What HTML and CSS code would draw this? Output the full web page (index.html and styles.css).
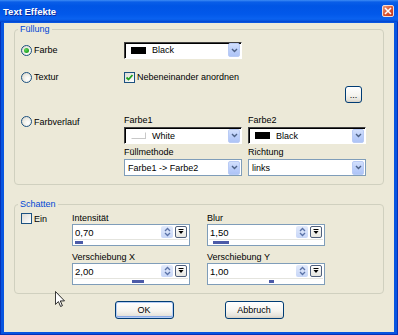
FILE: index.html
```html
<!DOCTYPE html>
<html lang="de">
<head>
  <meta charset="UTF-8" />
  <title>Text Effekte</title>
  <link rel="stylesheet" href="styles.css">
</head>
<body>
<div class="window">
  <div class="titlebar">
    <span class="title">Text Effekte</span>
    <span class="close"><svg width="8" height="8" viewBox="0 0 8 8"><path d="M1 1L7 7M7 1L1 7" stroke="#fff" stroke-width="1.6"/></svg></span>
  </div>
  <div class="frame">
    <div class="client">

      <fieldset class="group fill">
        <legend>Füllung</legend>
        <div class="row row-farbe">
          <label class="opt"><span class="radio on"></span>Farbe</label>
          <div class="combo color">
            <span class="swatch black"></span><span class="value">Black</span>
            <span class="drop"><svg width="7" height="5" viewBox="0 0 7 5"><path d="M1 1l2.5 2.5L6 1" stroke="#4d6185" stroke-width="1.4" fill="none"/></svg></span>
          </div>
        </div>
        <div class="row row-textur">
          <label class="opt"><span class="radio"></span>Textur</label>
          <label class="opt check-opt"><span class="check on"><svg width="9" height="9" viewBox="0 0 9 9"><path d="M1.5 4.5l2 2L7.5 2" stroke="#21a121" stroke-width="1.8" fill="none"/></svg></span>Nebeneinander anordnen</label>
        </div>
        <div class="row row-more">
          <button class="btn small">...</button>
        </div>
        <div class="gradient">
          <label class="opt grad-opt"><span class="radio"></span>Farbverlauf</label>
          <div class="field">
            <span class="field-label">Farbe1</span>
            <div class="combo color">
              <span class="swatch white"></span><span class="value">White</span>
              <span class="drop"><svg width="7" height="5" viewBox="0 0 7 5"><path d="M1 1l2.5 2.5L6 1" stroke="#4d6185" stroke-width="1.4" fill="none"/></svg></span>
            </div>
          </div>
          <div class="field">
            <span class="field-label">Farbe2</span>
            <div class="combo color">
              <span class="swatch black"></span><span class="value">Black</span>
              <span class="drop"><svg width="7" height="5" viewBox="0 0 7 5"><path d="M1 1l2.5 2.5L6 1" stroke="#4d6185" stroke-width="1.4" fill="none"/></svg></span>
            </div>
          </div>
          <div></div>
          <div class="field">
            <span class="field-label">Füllmethode</span>
            <div class="combo">
              <span class="value">Farbe1 -&gt; Farbe2</span>
              <span class="drop"><svg width="7" height="5" viewBox="0 0 7 5"><path d="M1 1l2.5 2.5L6 1" stroke="#4d6185" stroke-width="1.4" fill="none"/></svg></span>
            </div>
          </div>
          <div class="field">
            <span class="field-label">Richtung</span>
            <div class="combo">
              <span class="value">links</span>
              <span class="drop"><svg width="7" height="5" viewBox="0 0 7 5"><path d="M1 1l2.5 2.5L6 1" stroke="#4d6185" stroke-width="1.4" fill="none"/></svg></span>
            </div>
          </div>
        </div>
      </fieldset>

      <fieldset class="group shadow">
        <legend>Schatten</legend>
        <div class="shadow-body">
          <div class="ein">
            <label class="opt check-opt"><span class="check"></span>Ein</label>
          </div>
          <div class="spins">
            <div class="field">
              <span class="field-label">Intensität</span>
              <div class="spin">
                <div class="spin-top">
                  <span class="value">0,70</span>
                  <span class="updown"><svg width="7" height="10" viewBox="0 0 7 10"><path d="M1 4l2.5-2.5L6 4M1 6l2.5 2.5L6 6" stroke="#5b73a8" stroke-width="1.3" fill="none"/></svg></span>
                  <span class="pick"><svg width="6" height="6" viewBox="0 0 6 6"><path d="M0.5 0.5h5" stroke="#000"/><path d="M0.5 2h5L3 5z" fill="#000"/></svg></span>
                </div>
                <div class="track"><span class="thumb" style="margin-left:1px;width:8px"></span></div>
              </div>
            </div>
            <div class="field">
              <span class="field-label">Blur</span>
              <div class="spin">
                <div class="spin-top">
                  <span class="value">1,50</span>
                  <span class="updown"><svg width="7" height="10" viewBox="0 0 7 10"><path d="M1 4l2.5-2.5L6 4M1 6l2.5 2.5L6 6" stroke="#5b73a8" stroke-width="1.3" fill="none"/></svg></span>
                  <span class="pick"><svg width="6" height="6" viewBox="0 0 6 6"><path d="M0.5 0.5h5" stroke="#000"/><path d="M0.5 2h5L3 5z" fill="#000"/></svg></span>
                </div>
                <div class="track"><span class="thumb" style="margin-left:4px;width:16px"></span></div>
              </div>
            </div>
            <div class="field">
              <span class="field-label">Verschiebung X</span>
              <div class="spin">
                <div class="spin-top">
                  <span class="value">2,00</span>
                  <span class="updown"><svg width="7" height="10" viewBox="0 0 7 10"><path d="M1 4l2.5-2.5L6 4M1 6l2.5 2.5L6 6" stroke="#5b73a8" stroke-width="1.3" fill="none"/></svg></span>
                  <span class="pick"><svg width="6" height="6" viewBox="0 0 6 6"><path d="M0.5 0.5h5" stroke="#000"/><path d="M0.5 2h5L3 5z" fill="#000"/></svg></span>
                </div>
                <div class="track"><span class="thumb" style="margin-left:58px;width:12px"></span></div>
              </div>
            </div>
            <div class="field">
              <span class="field-label">Verschiebung Y</span>
              <div class="spin">
                <div class="spin-top">
                  <span class="value">1,00</span>
                  <span class="updown"><svg width="7" height="10" viewBox="0 0 7 10"><path d="M1 4l2.5-2.5L6 4M1 6l2.5 2.5L6 6" stroke="#5b73a8" stroke-width="1.3" fill="none"/></svg></span>
                  <span class="pick"><svg width="6" height="6" viewBox="0 0 6 6"><path d="M0.5 0.5h5" stroke="#000"/><path d="M0.5 2h5L3 5z" fill="#000"/></svg></span>
                </div>
                <div class="track"><span class="thumb" style="margin-left:60px;width:5px"></span></div>
              </div>
            </div>
          </div>
        </div>
      </fieldset>

      <div class="buttons">
        <button class="btn default">OK</button>
        <button class="btn">Abbruch</button>
      </div>
    </div>
  </div>
  <svg class="cursor" width="10" height="16" viewBox="0 0 12 19"><path d="M0.5 0.5V16l3.6-3.4 2.6 5.9 2.2-1-2.5-5.7h5z" fill="#fff" stroke="#000" stroke-width="1"/></svg>
</div>
</body>
</html>
```

FILE: styles.css
```css
* { box-sizing: border-box; }
html, body { margin: 0; padding: 0; }
body { width: 398px; height: 335px; overflow: hidden; font-family: "Liberation Sans", Arial, sans-serif; font-size: 9px; color: #000; background: #ece9d8; }

.window { position: relative; width: 398px; height: 335px; display: flex; flex-direction: column; }
.titlebar { height: 22px; display: flex; align-items: center; justify-content: space-between; padding: 0 4px 0 3px;
  background: linear-gradient(#3d8cf5 0, #0a5ee8 2px, #0055e5 6px, #0258ea 14px, #0a62f0 19px, #0451dc 21px, #0240c8 22px); }
.title { color: #fff; font-weight: bold; font-size: 9.5px; text-shadow: 1px 1px 0 #0c2a9a; }
.close { width: 12px; height: 12px; display: flex; align-items: center; justify-content: center; border: 1px solid #f3dcd4; border-radius: 2px;
  background: linear-gradient(135deg, #eb9c7c, #d9512e 55%, #c03a22); }

.frame { flex: 1; padding: 0 4px 4px; background: #0855e0; box-shadow: inset 1px 0 0 #0532b8, inset -1px 0 0 #0532b8, inset 0 -1px 0 #0532b8; }
.client { height: 100%; background: #ece9d8; }

.group { border: 1px solid #d0d0bf; border-radius: 4px; margin: 0 10px; min-width: 0; }
.group legend { color: #0046d5; line-height: 12px; padding: 0 2px; margin-left: -3px; }
.fill { margin-top: 1px; padding: 0 0 8px 6px; }
.shadow { margin-top: 13px; padding: 2px 0 8px 6px; }

.row { display: flex; align-items: center; }
.row-farbe { height: 20px; margin-top: 5px; }
.row-textur { height: 16px; margin-top: 9px; }
.row-more { height: 17px; margin-top: 1px; justify-content: flex-end; padding-right: 21px; }
.row .opt:first-child { width: 103px; }

.opt { display: flex; align-items: center; gap: 2px; white-space: nowrap; }
.radio { width: 11px; height: 11px; border: 1px solid #1c5180; border-radius: 50%; display: flex; align-items: center; justify-content: center;
  background: radial-gradient(circle at 65% 65%, #ffffff 0, #f4f3ee 35%, #d6d3c5 100%); }
.radio.on::after { content: ""; width: 5px; height: 5px; border-radius: 50%; background: radial-gradient(circle at 35% 35%, #5cd65c, #21a121 70%); }
.check { width: 11px; height: 11px; border: 1px solid #1c5180; display: flex; align-items: center; justify-content: center;
  background: linear-gradient(135deg, #dcdbd5, #ffffff); }
.check-opt { gap: 2px; }

.combo { position: relative; width: 118px; height: 17px; display: flex; align-items: center; background: #fff; border: 1px solid #7f9db9; padding: 0 1px 0 3px; }
.combo.color { border-color: #404040 #fff #fff #404040; box-shadow: inset 1px 1px 0 #000; padding-left: 6px; }
.combo .value { flex: 1; white-space: nowrap; }
.swatch { width: 15px; height: 7px; margin-right: 6px; }
.swatch.black { background: #000; border: 1px solid #000; }
.swatch.white { background: #fff; border: 1px solid #c8c8c8; border-left-color: #fff; border-top-color: #fff; }
.drop { width: 12px; height: 14px; display: flex; align-items: center; justify-content: center; border-radius: 2px;
  background: linear-gradient(#d3e0fc, #bccffa 50%, #aec4f6); border: 1px solid #b9cbf5; }

.gradient { display: grid; grid-template-columns: 97px 118px 116px; column-gap: 6px; row-gap: 2px; margin-top: 11px; }
.grad-opt { align-self: start; margin-top: 2px; height: 11px; }
.field { display: flex; flex-direction: column; }
.field-label { height: 13px; line-height: 13px; white-space: nowrap; }

.shadow-body { display: flex; }
.ein { width: 51px; padding-top: 1px; }
.spins { display: grid; grid-template-columns: 118px 118px; column-gap: 17px; row-gap: 5px; }
.spins .field-label { height: 12px; line-height: 12px; }
.spin { height: 22px; border: 1px solid #7f9db9; background: #fff; display: flex; flex-direction: column; }
.spin-top { height: 14px; display: flex; align-items: center; padding: 0 2px 0 2px; gap: 2px; }
.spin-top .value { flex: 1; font-size: 9.5px; }
.updown { width: 12px; height: 12px; display: flex; align-items: center; justify-content: center; border-radius: 2px;
  background: linear-gradient(#e2eafb, #c7d6f7); }
.pick { width: 12px; height: 12px; display: flex; align-items: center; justify-content: center; border: 1px solid #4f5f7c; border-radius: 2px;
  background: linear-gradient(#ffffff, #e6e6e0); }
.track { flex: 1; border-top: 1px solid #e4e4de; margin: 0 1px; }
.thumb { display: block; height: 3px; margin-top: 1px; background: #4c5ba8; }

.buttons { display: flex; justify-content: center; gap: 51px; margin-top: 7px; }
.btn { width: 59px; height: 18px; padding: 0; font: inherit; color: #000; border: 1px solid #003c74; border-radius: 3px;
  background: linear-gradient(#ffffff, #f5f4ef 55%, #e6e4dc 85%, #d6d0c5); }
.btn.default { box-shadow: inset 0 0 0 1px #b5cdf5, inset 0 -1px 0 1px #8aaae6; }
.btn.small { width: 17px; height: 17px; line-height: 10px; }

.cursor { position: absolute; left: 55px; top: 291px; }
```
